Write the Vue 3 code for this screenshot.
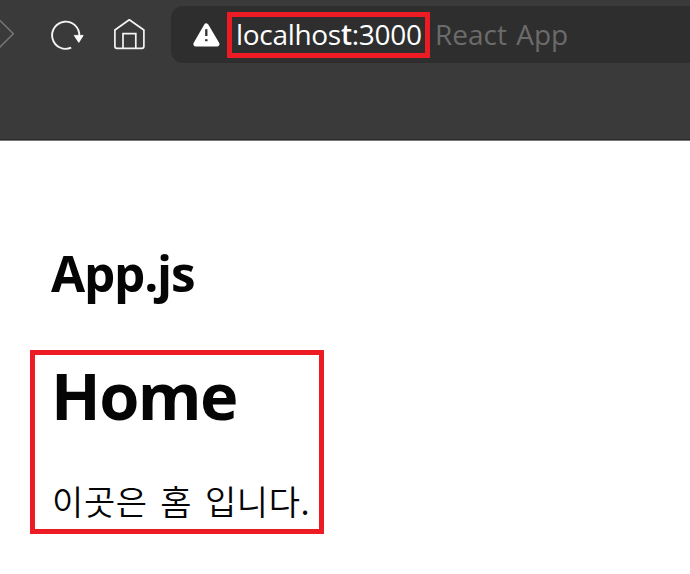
<script setup>
const host = 'localhos'
const port = ':3000'
</script>

<template>
  <div class="window">
    <header class="toolbar">
      <nav class="controls">
        <svg class="forward" width="16" height="36" viewBox="0 0 16 36">
          <path d="M-1 3.5 13.3 17.7-1 32" fill="none" stroke="#777" stroke-width="1.5" />
        </svg>
        <svg class="reload" width="36" height="36" viewBox="0 0 36 36">
          <path d="M22.2 31.7A13.6 13.6 0 1 1 30.3 20" fill="none" stroke="#f4f4f4" stroke-width="1.9" />
          <path d="M25.2 19.4H34.2L29.8 26.4Z" fill="#fff" stroke="#fff" stroke-width=".8" stroke-linejoin="round" />
        </svg>
        <svg class="home" width="36" height="36" viewBox="0 0 36 36">
          <path d="M3.9 14 18.3 3.8 32.9 14V30.3Q32.9 32.3 30.9 32.3H5.9Q3.9 32.3 3.9 30.3Z" fill="none" stroke="#f4f4f4" stroke-width="1.7" stroke-linejoin="round" />
          <path d="M12 32.3V17.7H24.8V32.3" fill="none" stroke="#f4f4f4" stroke-width="1.7" />
        </svg>
      </nav>
      <div class="address">
        <svg class="warning" width="28" height="26" viewBox="0 0 28 26">
          <path d="M14.3 3.9 24.9 22.1H3.9Z" fill="#fff" stroke="#fff" stroke-width="5" stroke-linejoin="round" />
          <path d="M14.3 7.2V14" stroke="#303030" stroke-width="2.3" />
          <path d="M14.3 17.2V19.2" stroke="#303030" stroke-width="2.5" />
        </svg>
        <div class="url"><span class="url-text">{{ host }}<b>t</b>{{ port }}</span></div>
        <span class="title">React App</span>
      </div>
    </header>
    <main class="page">
      <h2>App.js</h2>
      <section class="route">
        <h1>Home</h1>
        <p>이곳은 홈 입니다.</p>
      </section>
    </main>
  </div>
</template>

<style>
body {
  margin: 0;
  background: #fff;
}
</style>

<style scoped>
.window {
  width: 690px;
  height: 574px;
  overflow: hidden;
  background: #fff;
  color: #050505;
  font-family: "Open Sans", "Noto Sans CJK KR", sans-serif;
}
.toolbar {
  display: flex;
  box-sizing: border-box;
  height: 141px;
  padding-top: 6px;
  background: #3a3a3a;
  border-bottom: 1px solid #777;
  box-shadow: inset 0 -1px #292929;
}
.controls {
  display: flex;
  flex: none;
  width: 171px;
  padding-top: 10px;
  box-sizing: border-box;
}
.reload {
  margin-left: 33px;
}
.home {
  margin-left: 26px;
}
.address {
  display: flex;
  flex: 1;
  height: 57px;
  background: #2e2e2e;
  border-radius: 12px 0 0 12px;
  white-space: nowrap;
}
.warning {
  flex: none;
  margin: 16px 0 0 21px;
}
.url {
  flex: none;
  box-sizing: border-box;
  width: 203px;
  height: 46px;
  margin: 6px 0 0 7px;
  padding-left: 4px;
  border: 5px solid #ed1c24;
  color: #fff;
  font-size: 28px;
  letter-spacing: -0.3px;
  line-height: 34px;
}
.url-text {
  display: block;
}
.url b {
  font-weight: 600;
}
.title {
  margin: 11px 0 0 5px;
  color: #6b6b6b;
  font-size: 28px;
  line-height: 34px;
  word-spacing: 2px;
}
.page {
  padding: 102px 0 0 30px;
}
h2 {
  margin: 0 0 0 21px;
  font-size: 49.5px;
  font-weight: 700;
  letter-spacing: -1.2px;
  line-height: 60px;
}
.route {
  box-sizing: border-box;
  width: 294px;
  height: 184px;
  margin-top: 47px;
  padding: 5px 0 0 16px;
  border: 5px solid #ed1c24;
  white-space: nowrap;
}
h1 {
  margin: 0;
  font-size: 65px;
  font-weight: 700;
  letter-spacing: -1.6px;
  line-height: 70px;
}
p {
  margin: 49px 0 0 1px;
  font-family: "Noto Sans CJK KR", sans-serif;
  font-size: 34px;
  font-weight: 350;
  letter-spacing: 0.6px;
  line-height: 44px;
  word-spacing: 4.5px;
}
</style>
